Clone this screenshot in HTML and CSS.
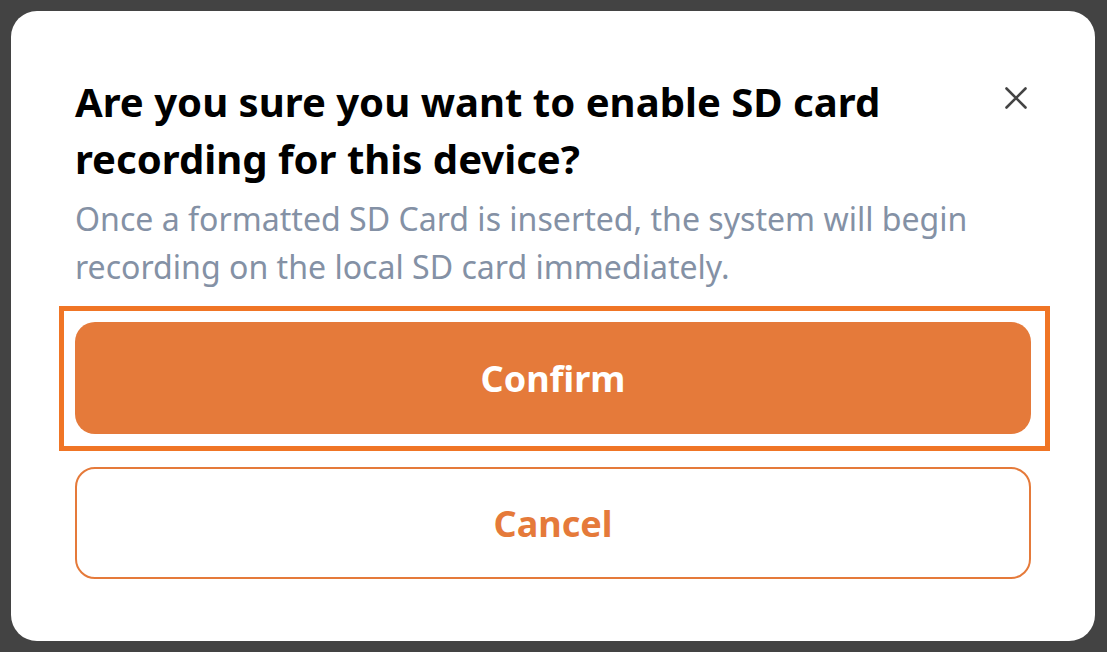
FILE: index.html
```html
<!DOCTYPE html>
<html lang="en">
<head>
<meta charset="utf-8">
<title>Enable SD card recording</title>
<link rel="stylesheet" href="styles.css">
</head>
<body>
<div class="overlay">
  <div class="modal" role="dialog" aria-labelledby="modal-title">
    <div class="header">
      <h2 id="modal-title" class="title">Are you sure you want to enable SD card recording for this device?</h2>
      <button class="close" aria-label="Close">
        <svg width="22" height="22" viewBox="0 0 22 22"><path d="M1.5 1.5 L20.5 20.5 M20.5 1.5 L1.5 20.5" stroke="#444" stroke-width="2.6" stroke-linecap="round" fill="none"/></svg>
      </button>
    </div>
    <p class="desc">Once a formatted SD Card is inserted, the system will begin recording on the local SD card immediately.</p>
    <div class="actions">
      <button class="btn btn-primary">Confirm</button>
      <button class="btn btn-secondary">Cancel</button>
    </div>
  </div>
</div>
</body>
</html>
```

FILE: styles.css
```css
html, body {
  margin: 0;
  padding: 0;
  height: 100%;
}
body {
  background: #434343;
  font-family: "Noto Sans", "Open Sans", sans-serif;
}
.overlay {
  box-sizing: border-box;
  height: 100%;
  padding: 11px 12px 11px 11px;
}
.modal {
  box-sizing: border-box;
  height: 630px;
  background: #ffffff;
  border-radius: 26px;
  padding: 62px 64px 63px 64px;
  display: flex;
  flex-direction: column;
}
.header {
  display: flex;
  align-items: flex-start;
  justify-content: space-between;
  gap: 40px;
}
.title {
  margin: 0;
  font-size: 40.1px;
  line-height: 57px;
  font-weight: 700;
  color: #000;
  max-width: 880px;
}
.close {
  background: none;
  border: 0;
  padding: 0;
  margin: 14px 4px 0 0;
  width: 22px;
  height: 22px;
  cursor: pointer;
  display: block;
  flex: none;
}
.close svg { display: block; }
.desc {
  margin: 8px 0 0 0;
  font-size: 32.1px;
  line-height: 48px;
  color: #8491a5;
  max-width: 920px;
}
.actions {
  display: flex;
  flex-direction: column;
  gap: 33px;
  margin-top: 31px;
}
.btn {
  height: 112px;
  border-radius: 20px;
  font-family: "Noto Sans", "Open Sans", sans-serif;
  font-size: 36px;
  font-weight: 700;
  cursor: pointer;
}
.btn-primary {
  position: relative;
  background: #e57a3a;
  color: #fff;
  border: 0;
}
.btn-primary::after {
  content: "";
  position: absolute;
  top: -16px;
  right: -19px;
  bottom: -17px;
  left: -16px;
  border: 5px solid #f07525;
  pointer-events: none;
}
.btn-secondary {
  background: #fff;
  color: #e57a3a;
  border: 2px solid #e57a3a;
}
```
